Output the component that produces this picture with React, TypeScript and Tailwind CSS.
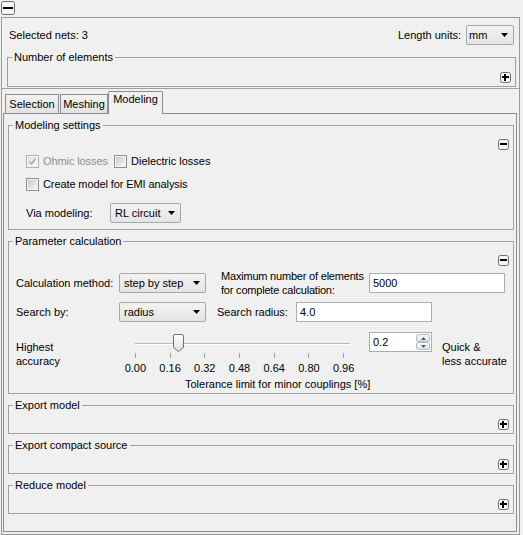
import { useId } from "react";

// Qt-style "Modeling" options pane (Windows 7 look)

function Toggle({ plus = false, size = 11 }: { plus?: boolean; size?: number }) {
  const m = Math.floor(size / 2) - 1;
  return (
    <svg width={size} height={size} className="block shrink-0">
      <rect x="0.5" y="0.5" width={size - 1} height={size - 1} rx="2" fill="#f6f6f6" stroke="#6e6e6e" />
      <rect x="2" y={m} width={size - 4} height="2" fill="#000" />
      {plus && <rect x={m} y="2" width="2" height={size - 4} fill="#000" />}
    </svg>
  );
}

function Check({ checked = false, disabled = false }: { checked?: boolean; disabled?: boolean }) {
  const id = "cb" + useId().replace(/[^a-zA-Z0-9]/g, "");
  return (
    <svg width="13" height="13" className="block shrink-0">
      <defs>
        <linearGradient id={id} x1="0" y1="0" x2="1" y2="1">
          <stop offset="0" stopColor={disabled ? "#e2e2e2" : "#c9c9c9"} />
          <stop offset="1" stopColor="#f8f8f8" />
        </linearGradient>
      </defs>
      <rect x="0.5" y="0.5" width="12" height="12" fill="#f4f4f4" stroke={disabled ? "#b1b1b1" : "#8e8f8f"} />
      <rect x="2" y="2" width="9" height="9" fill={`url(#${id})`} />
      {checked && (
        <path d="M3.5 6.5 5.5 9 9.5 3.5" fill="none" stroke={disabled ? "#a4a4a4" : "#333"} strokeWidth="1.3" />
      )}
    </svg>
  );
}

function Combo({ value, className }: { value: string; className: string }) {
  return (
    <div
      className={`flex h-[20px] shrink-0 items-center justify-between rounded-[2px] border border-[#a7a7a7] bg-linear-to-b from-[#f3f3f3] to-[#e4e4e4] pr-[5px] ${className}`}
    >
      <span className="whitespace-nowrap">{value}</span>
      <svg width="7" height="4" className="block">
        <path d="M0 0H7L3.5 4Z" fill="#000" />
      </svg>
    </div>
  );
}

function Edit({ value, className }: { value: string; className: string }) {
  return (
    <div className={`flex h-[20px] shrink-0 items-center border border-[#abadb3] bg-white pl-[3px] ${className}`}>
      {value}
    </div>
  );
}

function Group({ title, className = "", children }: { title: string; className?: string; children: React.ReactNode }) {
  return (
    <fieldset className={`border border-[#a0a0a0] ${className}`}>
      <legend className="ml-[4px] px-[2px] leading-[13px]">{title}</legend>
      {children}
    </fieldset>
  );
}

function Collapsed({ title }: { title: string }) {
  return (
    <Group title={title} className="mt-[5px]">
      <div className="flex justify-end pb-[3px] pr-[4px] pt-[7px]">
        <Toggle plus />
      </div>
    </Group>
  );
}

function Tab({ label, className }: { label: string; className: string }) {
  return (
    <div
      className={`flex h-[19px] items-center justify-center border border-b-0 border-[#898c95] bg-linear-to-b from-[#f3f3f3] to-[#e2e2e2] ${className}`}
    >
      {label}
    </div>
  );
}

const TICKS = [10, 45, 79, 114, 149, 183, 218];
const TICK_LABELS = ["0.00", "0.16", "0.32", "0.48", "0.64", "0.80", "0.96"];

function Slider() {
  return (
    <div className="w-[230px] shrink-0">
      <svg width="230" height="27" className="block">
        <defs>
          <linearGradient id="thumb" x1="0" y1="0" x2="0" y2="1">
            <stop offset="0" stopColor="#ffffff" />
            <stop offset="1" stopColor="#dedede" />
          </linearGradient>
        </defs>
        <rect x="10" y="11" width="215" height="1" fill="#b9b9b9" />
        <rect x="10" y="12" width="215" height="1" fill="#ffffff" />
        {TICKS.map((t) => (
          <rect key={t} x={t} y="21" width="1" height="5" fill="#a3a3a3" />
        ))}
        <path
          d="M48.5 4 Q48.5 2.5 50 2.5 H57 Q58.5 2.5 58.5 4 V15.5 L53.5 19.5 L48.5 15.5 Z"
          fill="url(#thumb)"
          stroke="#707070"
        />
      </svg>
      <div className="-ml-[7px] mt-[3px] grid w-[243px] grid-cols-7 text-center leading-[13px]">
        {TICK_LABELS.map((l) => (
          <span key={l}>{l}</span>
        ))}
      </div>
    </div>
  );
}

function SpinBtn({ up = false }: { up?: boolean }) {
  return (
    <div className="flex h-[8px] items-center justify-center rounded-[2px] border border-[#b9bec6] bg-linear-to-b from-[#f8f8f8] to-[#e1e3e6]">
      <svg width="5" height="3" className="block">
        <path d={up ? "M0 3H5L2.5 0Z" : "M0 0H5L2.5 3Z"} fill="#4f5b6b" />
      </svg>
    </div>
  );
}

function Spin({ value }: { value: string }) {
  return (
    <div className="flex h-[20px] w-[63px] shrink-0 border border-[#abadb3] bg-white">
      <span className="flex flex-1 items-center pl-[3px]">{value}</span>
      <div className="flex w-[16px] flex-col p-px">
        <SpinBtn up />
        <SpinBtn />
      </div>
    </div>
  );
}

export default function App() {
  return (
    <div className="h-[535px] w-[523px] overflow-hidden bg-[#f0f0f0] font-['Liberation_Sans',Arial,sans-serif] text-[11px] leading-[13px] text-black">
      <div className="pl-[1px] pt-[1px]">
        <Toggle size={14} />
      </div>

      <div className="ml-[1px] mt-[2px] h-[518px] w-[519px] border border-[#9a9a9a]">
        {/* header: selection summary */}
        <div className="h-[71px] border-b border-[#a0a0a0] pl-[5px] pr-[3px] pt-[7px]">
          <div className="flex h-[20px] items-center justify-between px-[2px]">
            <span>Selected nets: 3</span>
            <div className="flex items-center">
              <span>Length units:</span>
              <Combo value="mm" className="ml-[5px] w-[48px] pl-[2px]" />
            </div>
          </div>
          <Group title="Number of elements" className="mt-[6px]">
            <div className="flex justify-end pb-[3px] pr-[4px] pt-[8px]">
              <Toggle plus />
            </div>
          </Group>
        </div>

        {/* tabs */}
        <div className="ml-[1px] mr-[2px] mt-[2px]">
          <div className="flex h-[22px] items-end pl-[2px]">
            <Tab label="Selection" className="w-[54px]" />
            <Tab label="Meshing" className="ml-[1px] w-[48px]" />
            <div className="relative z-10 -mb-px flex h-[23px] w-[55px] justify-center rounded-t-[2px] border border-b-0 border-[#898c95] bg-[#f0f0f0] pt-[1px]">
              Modeling
            </div>
          </div>

          <div className="h-[419px] border border-[#898c95] pl-[4px] pr-[2px] pt-[5px]">
            <Group title="Modeling settings">
              <div className="flex justify-end pr-[4px] pt-[7px]">
                <Toggle />
              </div>
              <div className="mt-[5px] flex h-[13px] items-center pl-[17px]">
                <div className="flex w-[88px] items-center">
                  <Check checked disabled />
                  <span className="ml-[4px] tracking-[-0.1px] text-[#8d8d8d]">Ohmic losses</span>
                </div>
                <Check />
                <span className="ml-[4px]">Dielectric losses</span>
              </div>
              <div className="mt-[10px] flex h-[13px] items-center pl-[17px]">
                <Check />
                <span className="ml-[4px] tracking-[-0.1px]">Create model for EMI analysis</span>
              </div>
              <div className="mt-[12px] flex items-center pb-[6px] pl-[17px]">
                <span className="w-[84px]">Via modeling:</span>
                <Combo value="RL circuit" className="w-[71px] pl-[4px]" />
              </div>
            </Group>

            <Group title="Parameter calculation" className="mt-[5px]">
              <div className="flex justify-end pr-[4px] pt-[7px]">
                <Toggle />
              </div>
              <div className="mt-[3px] flex items-center pl-[7px]">
                <span className="w-[103px]">Calculation method:</span>
                <Combo value="step by step" className="w-[87px] pl-[4px]" />
                <span className="ml-[15px] w-[148px] whitespace-nowrap leading-[14px] tracking-[-0.2px]">
                  Maximum number of elements
                  <br />
                  for complete calculation:
                </span>
                <Edit value="5000" className="w-[136px]" />
              </div>
              <div className="mt-[5px] flex items-center pl-[7px]">
                <span className="w-[103px]">Search by:</span>
                <Combo value="radius" className="w-[87px] pl-[4px]" />
                <span className="ml-[11px] w-[79px]">Search radius:</span>
                <Edit value="4.0" className="w-[136px]" />
              </div>
              <div className="mt-[10px] flex items-start pl-[7px]">
                <span className="mt-[8px] w-[109px] leading-[14px]">
                  Highest
                  <br />
                  accuracy
                </span>
                <Slider />
                <div className="ml-[14px]">
                  <Spin value="0.2" />
                </div>
                <span className="ml-[10px] mt-[8px] leading-[14px]">
                  Quick &amp;
                  <br />
                  less accurate
                </span>
              </div>
              <div className="mt-[3px] pb-[2px] pl-[176px]">Tolerance limit for minor couplings [%]</div>
            </Group>

            <Collapsed title="Export model" />
            <Collapsed title="Export compact source" />
            <Collapsed title="Reduce model" />
          </div>
        </div>
      </div>
    </div>
  );
}
